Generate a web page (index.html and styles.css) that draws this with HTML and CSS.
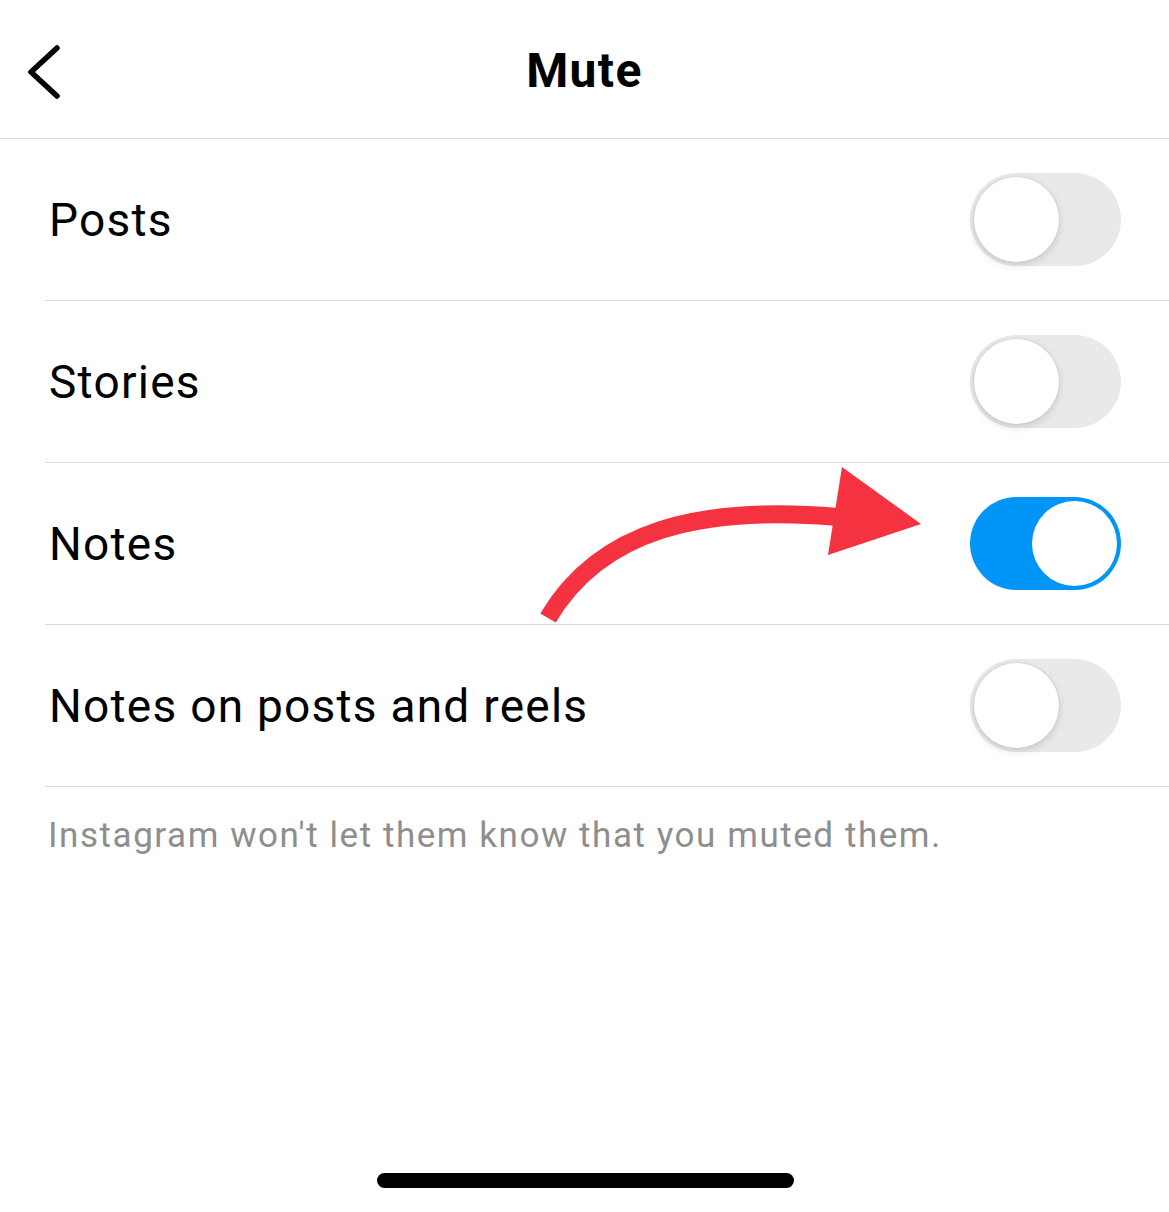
FILE: index.html
```html
<!DOCTYPE html>
<html lang="en">
<head>
<meta charset="utf-8">
<title>Mute</title>
<link rel="stylesheet" href="styles.css">
</head>
<body>
<div class="screen">
  <header class="topbar">
    <div class="back">
      <svg width="44" height="60" viewBox="0 0 44 60" aria-hidden="true">
        <path d="M37 9 L11 33 L37 57" fill="none" stroke="#000" stroke-width="5.5" stroke-linecap="round" stroke-linejoin="round"/>
      </svg>
    </div>
    <h1 class="title">Mute</h1>
    <div></div>
  </header>

  <ul class="list">
    <li class="row"><span class="label">Posts</span><span class="toggle"><span class="knob"></span></span></li>
    <li class="row"><span class="label">Stories</span><span class="toggle"><span class="knob"></span></span></li>
    <li class="row"><span class="label">Notes</span><span class="toggle on"><span class="knob"></span></span></li>
    <li class="row"><span class="label">Notes on posts and reels</span><span class="toggle"><span class="knob"></span></span></li>
  </ul>

  <p class="note">Instagram won't let them know that you muted them.</p>

  <svg class="arrow" width="1169" height="700" viewBox="0 0 1169 700" aria-hidden="true">
    <path d="M548 618 C600 530 700 505 838 517" fill="none" stroke="#f5323f" stroke-width="18"/>
    <polygon points="842,467 921,524 828,555" fill="#f5323f"/>
  </svg>

  <div class="home"></div>
</div>
</body>
</html>
```

FILE: styles.css
```css
html, body {
  margin: 0;
  padding: 0;
  background: #fff;
}
body {
  font-family: Roboto, "Liberation Sans", Arial, sans-serif;
  color: #000;
}
.screen {
  position: relative;
  width: 1169px;
  height: 1212px;
  overflow: hidden;
}
.topbar {
  height: 139px;
  box-sizing: border-box;
  border-bottom: 1px solid #dbdbdb;
  display: grid;
  grid-template-columns: 1fr auto 1fr;
  align-items: center;
}
.back {
  padding-left: 20px;
  display: flex;
  align-items: center;
}
.title {
  margin: 0;
  font-size: 48px;
  font-weight: 700;
  letter-spacing: 1.4px;
  padding-top: 2px;
}
.list {
  list-style: none;
  margin: 0;
  padding: 0;
}
.row {
  margin-left: 45px;
  height: 161px;
  border-bottom: 1px solid #dbdbdb;
  display: flex;
  align-items: center;
  justify-content: space-between;
  padding-right: 48px;
}
.label {
  padding-left: 4px;
  font-size: 46px;
  font-weight: 400;
  letter-spacing: 1.25px;
}
.toggle {
  width: 151px;
  height: 93px;
  border-radius: 47px;
  background: #e9e9ea;
  position: relative;
  flex: none;
}
.knob {
  position: absolute;
  left: 4px;
  top: 4px;
  width: 85px;
  height: 85px;
  border-radius: 50%;
  background: #fff;
  box-shadow: 0 3px 8px rgba(0,0,0,0.14), 0 0 0 1px rgba(0,0,0,0.04);
}
.toggle.on {
  background: #0095f6;
}
.toggle.on .knob {
  left: auto;
  right: 4px;
  box-shadow: none;
}
.note {
  margin: 0;
  padding: 28px 0 0 48px;
  font-size: 35px;
  color: #8e8e8e;
  letter-spacing: 1.55px;
}
.arrow {
  position: absolute;
  left: 0;
  top: 0;
  pointer-events: none;
}
.home {
  position: absolute;
  left: 377px;
  top: 1173px;
  width: 417px;
  height: 15px;
  border-radius: 8px;
  background: #000;
}
```
